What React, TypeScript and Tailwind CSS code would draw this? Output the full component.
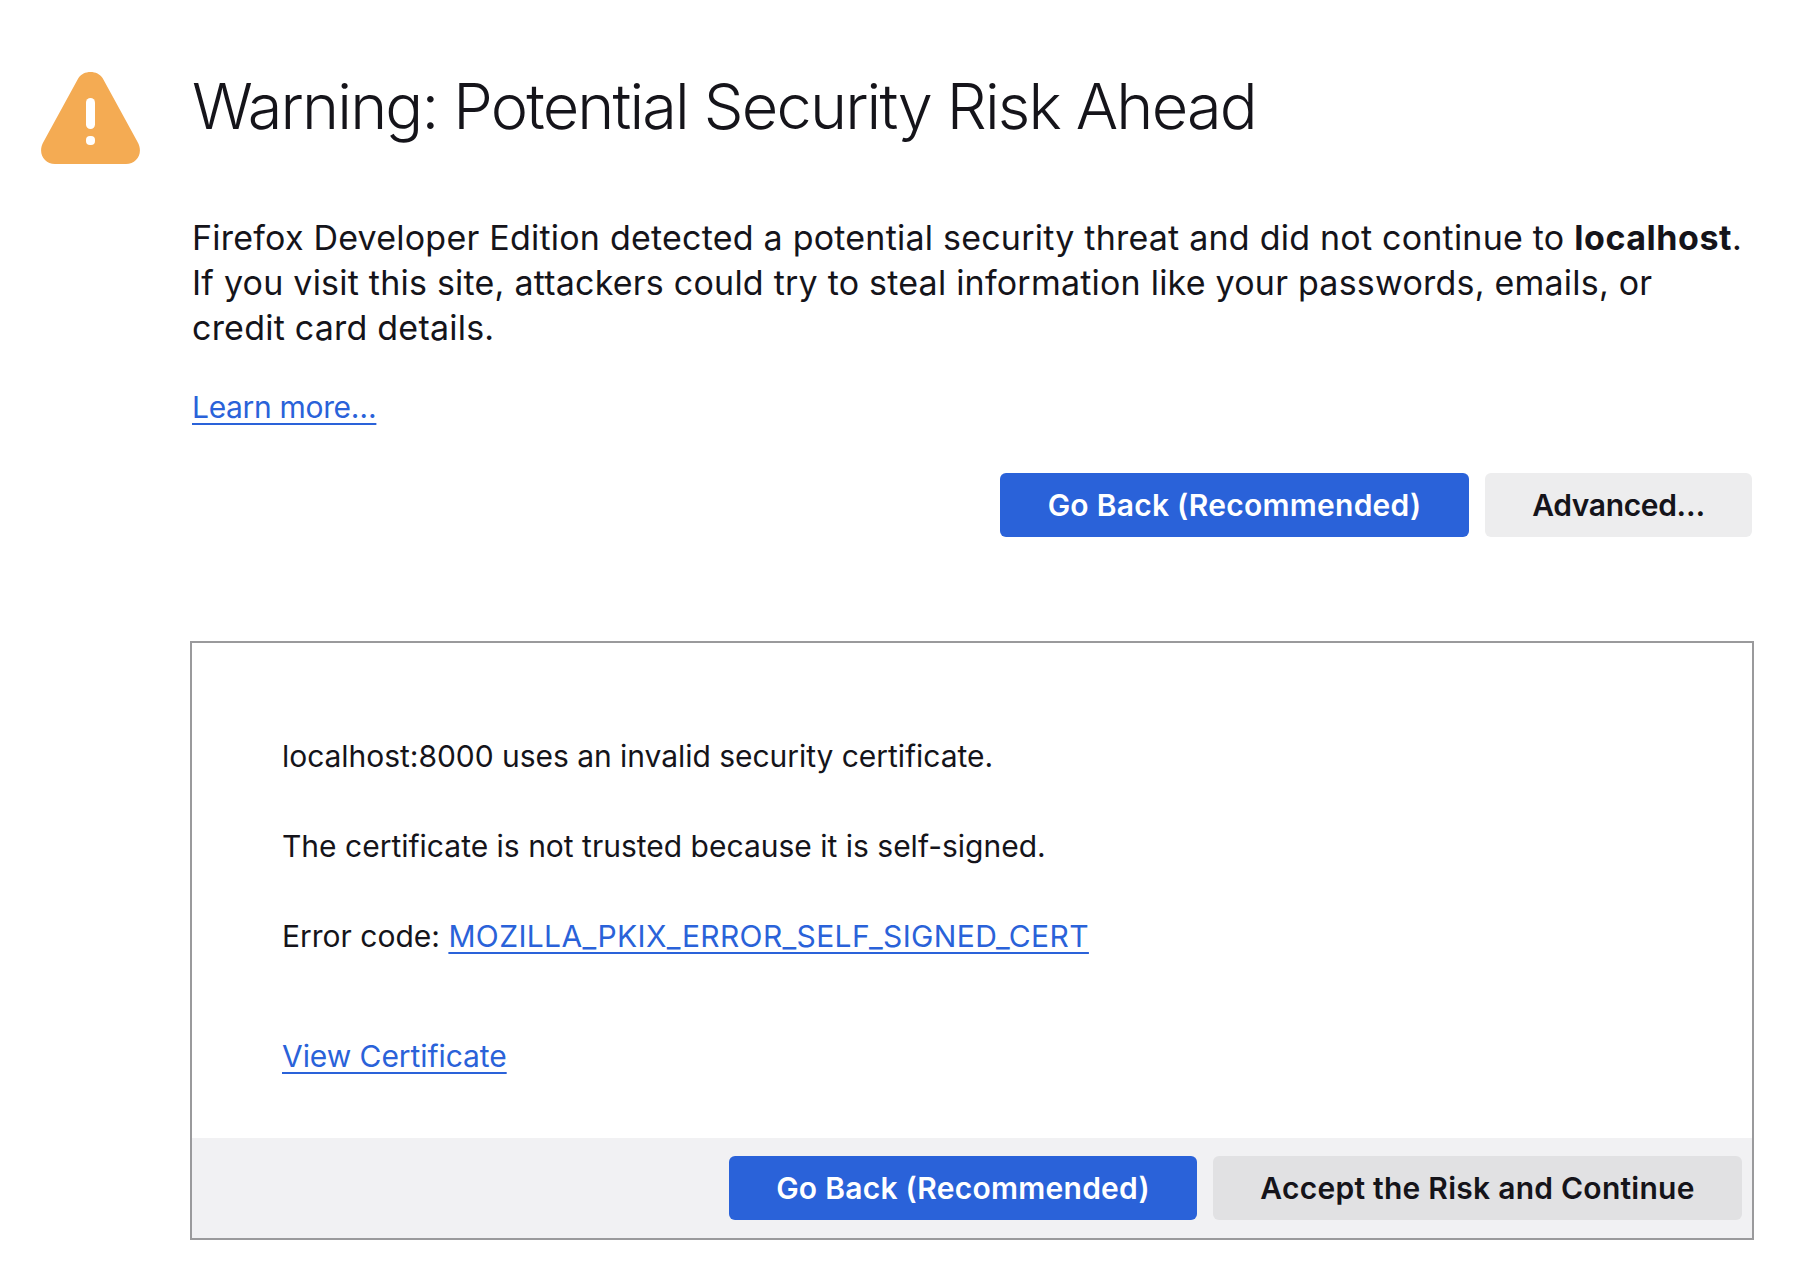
export default function App() {
  return (
    <div className="w-[1800px] h-[1280px] bg-white text-[#15141a] font-['Inter',sans-serif] overflow-hidden">
      <div className="flex flex-col pl-[190px] pr-[46px] pt-[66px]">
        <div className="relative ml-[2px]">
          <svg className="absolute left-[-151px] top-[6px] w-[99px] h-[92px]" viewBox="0 0 99 92">
            <path d="M37.3 6.300 C40 2 44.500 0 49.500 0 C54.500 0 59 2 61.700 6.300 L96.300 69.500 C103 81 96 92 85 92 L14 92 C3 92 -4 81 2.700 69.500 Z" fill="#f4ab53" />
            <rect x="45" y="26" width="9" height="31" rx="4.500" fill="#ffffff" />
            <rect x="45" y="64" width="9" height="9" rx="4" fill="#ffffff" />
          </svg>
          <h1 className="text-[63px] leading-[80px] font-light tracking-[-1.84px]">Warning: Potential Security Risk Ahead</h1>
        </div>
        <p className="ml-[2px] mt-[69px] text-[34px] leading-[45px] tracking-[0.22px]">
          Firefox Developer Edition detected a potential security threat and did not continue to <b className="font-bold tracking-[0.55px]">localhost</b>. If you visit this site, attackers could try to steal information like your passwords, emails, or credit card details.
        </p>
        <a className="ml-[2px] mt-[37px] text-[30px] leading-[40px] tracking-[-0.33px] text-[#2a62d9] underline decoration-2 underline-offset-[5px] self-start">Learn more…</a>
        <div className="mr-[2px] mt-[46px] flex justify-end gap-[16px]">
          <button className="h-[64px] w-[469px] pt-[1px] rounded-[6px] bg-[#2a62d9] text-white text-[30px] tracking-[0.25px] font-semibold">Go Back (Recommended)</button>
          <button className="h-[64px] w-[267px] pt-[1px] rounded-[6px] bg-[#ededee] text-[#15141a] text-[30px] tracking-[-0.35px] font-semibold">Advanced…</button>
        </div>
        <div className="mt-[104px] border-2 border-[#9a9a9c] h-[599px] flex flex-col">
          <div className="flex-1 px-[90px] pt-[93px] text-[30px] leading-[40px]">
            <p className="tracking-[-0.04px]">localhost:8000 uses an invalid security certificate.</p>
            <p className="mt-[50px]">The certificate is not trusted because it is self-signed.</p>
            <p className="mt-[50px]">Error code: <a className="text-[#2a62d9] underline decoration-2 underline-offset-[5px] tracking-[0.36px]">MOZILLA_PKIX_ERROR_SELF_SIGNED_CERT</a></p>
            <p className="mt-[80px]"><a className="text-[#2a62d9] underline decoration-2 underline-offset-[5px] tracking-[-0.07px]">View Certificate</a></p>
          </div>
          <div className="h-[100px] bg-[#f1f1f3] flex justify-end items-center gap-[16px] pr-[10px]">
            <button className="h-[64px] w-[468px] pt-[1px] rounded-[6px] bg-[#2a62d9] text-white text-[30px] tracking-[0.25px] font-semibold">Go Back (Recommended)</button>
            <button className="h-[64px] w-[529px] pt-[1px] rounded-[6px] bg-[#e1e1e3] text-[#15141a] text-[30px] tracking-[0.25px] font-semibold">Accept the Risk and Continue</button>
          </div>
        </div>
      </div>
    </div>
  );
}
